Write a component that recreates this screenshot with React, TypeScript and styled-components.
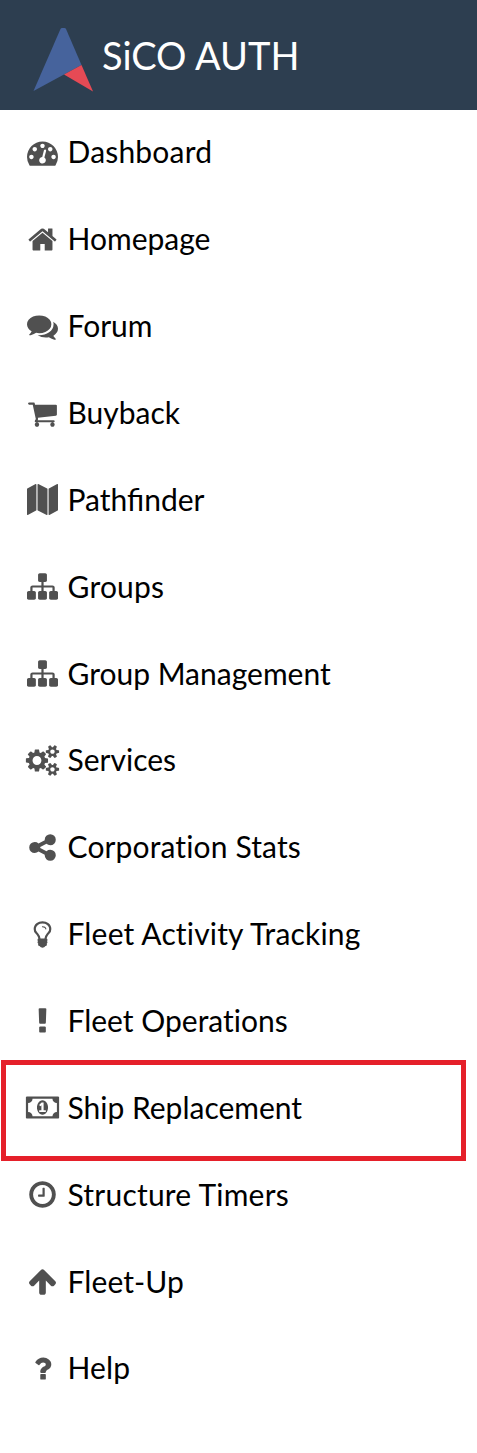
import React from "react";
import styled, { createGlobalStyle } from "styled-components";

const GlobalStyle = createGlobalStyle`
  body {
    margin: 0;
    background: #ffffff;
    font-family: Lato, "Liberation Sans", sans-serif;
  }
`;

const Sidebar = styled.aside`
  width: 477px;
  height: 1453px;
  overflow: hidden;
`;

const Header = styled.header`
  display: flex;
  align-items: flex-start;
  height: 110px;
  padding-left: 33px;
  box-sizing: border-box;
  background: #2d3e50;
`;

const Logo = styled.svg`
  flex: none;
  width: 61px;
  height: 65px;
  margin-top: 27px;
`;

const Title = styled.h1`
  margin: 0 0 0 8px;
  color: #ffffff;
  font-size: 38px;
  font-weight: 400;
  line-height: 110px;
  white-space: nowrap;
`;

const Menu = styled.nav`
  display: flex;
  flex-direction: column;
`;

const Item = styled.a`
  position: relative;
  display: flex;
  align-items: center;
  height: 86.86px;
  padding: 0 0 2px 22.5px;
  box-sizing: border-box;
  color: #000000;
  text-decoration: none;
`;

const Label = styled.span<{ $ligatures: boolean; $tracking: number }>`
  margin-bottom: 2px;
  font-size: 30px;
  font-variant-ligatures: ${({ $ligatures }) => ($ligatures ? "normal" : "none")};
  letter-spacing: ${({ $tracking }) => $tracking}px;
  line-height: 44px;
  white-space: nowrap;
`;

const Icon = styled.svg`
  flex: none;
  width: 31px;
  height: 31px;
  margin: 0 9.5px 0 4.5px;
  overflow: visible;
  fill: #505050;
`;

const Marker = styled.span`
  position: absolute;
  top: -5.4px;
  left: 1px;
  width: 465px;
  height: 101px;
  box-sizing: border-box;
  border: 5px solid #e5202a;
`;

type Entry = {
  label: string;
  path: string;
  shift?: number;
  marked?: boolean;
  ligatures?: boolean;
  tracking?: number;
};

const sitemap =
  "M1792 1248v320q0 40-28 68t-68 28h-320q-40 0-68-28t-28-68v-320q0-40 28-68t68-28h96v-192h-512v192h96q40 0 68 28t28 68v320q0 40-28 68t-68 28h-320q-40 0-68-28t-28-68v-320q0-40 28-68t68-28h96v-192h-512v192h96q40 0 68 28t28 68v320q0 40-28 68t-68 28h-320q-40 0-68-28t-28-68v-320q0-40 28-68t68-28h96v-192q0-52 38-90t90-38h512v-192h-96q-40 0-68-28t-28-68v-320q0-40 28-68t68-28h320q40 0 68 28t28 68v320q0 40-28 68t-68 28h-96v192h512q52 0 90 38t38 90v192h96q40 0 68 28t28 68z";

const entries: Entry[] = [
  {
    label: "Dashboard",
    tracking: 0.2,
    path: "M384 1152q0-53-37.5-90.5t-90.5-37.5-90.5 37.5-37.5 90.5 37.5 90.5 90.5 37.5 90.5-37.5 37.5-90.5zm192-448q0-53-37.5-90.5t-90.5-37.5-90.5 37.5-37.5 90.5 37.5 90.5 90.5 37.5 90.5-37.5 37.5-90.5zm428 481l101-382q6-26-7.5-48.5t-38.5-29.5-48 6.5-30 39.5l-101 382q-60 5-107 43.5t-63 98.5q-20 77 20 146t117 89 146-20 89-117q16-60-6-117t-72-91zm660-33q0-53-37.5-90.5t-90.5-37.5-90.5 37.5-37.5 90.5 37.5 90.5 90.5 37.5 90.5-37.5 37.5-90.5zm-640-640q0-53-37.5-90.5t-90.5-37.5-90.5 37.5-37.5 90.5 37.5 90.5 90.5 37.5 90.5-37.5 37.5-90.5zm448 192q0-53-37.5-90.5t-90.5-37.5-90.5 37.5-37.5 90.5 37.5 90.5 90.5 37.5 90.5-37.5 37.5-90.5zm320 448q0 261-141 483-19 29-54 29h-1402q-35 0-54-29-141-221-141-483 0-182 71-348t191-286 286-191 348-71 348 71 286 191 191 286 71 348z",
  },
  {
    label: "Homepage",
    path: "M1472 992v480q0 26-19 45t-45 19h-384v-384h-256v384h-384q-26 0-45-19t-19-45v-480q0-1 .5-3t.5-3l575-474 575 474q1 2 1 6zm223-69l-62 74q-8 9-21 11h-3q-13 0-21-7l-692-577-692 577q-12 8-24 7-13-2-21-11l-62-74q-8-10-7-23.5t11-21.5l719-599q32-26 76-26t76 26l244 204v-195q0-14 9-23t23-9h192q14 0 23 9t9 23v408l219 182q10 8 11 21.5t-7 23.5z",
  },
  {
    label: "Forum",
    path: "M1408 768q0 139-94 257t-256.5 186.5-353.5 68.5q-86 0-176-16-124 88-278 128-36 9-86 16h-3q-11 0-20.5-8t-11.5-21q-1-3-1-6.5t.5-6.5 2-6l2.5-5 3.5-5.5 4-5 4.5-5 4-4.5q5-6 23-25t26-29.5 22.5-29 25-38.5 20.5-44q-124-72-195-177t-71-224q0-139 94-257t256.5-186.5 353.5-68.5 353.5 68.5 256.5 186.5 94 257zm384 256q0 120-71 224.5t-195 176.5q10 24 20.5 44t25 38.5 22.5 29 26 29.5 23 25q1 1 4 4.5t4.5 5 4 5 3.5 5.5l2.5 5 2 6 .5 6.5-1 6.5q-3 14-13 22t-22 7q-50-7-86-16-154-40-278-128-90 16-176 16-271 0-472-132 58 4 88 4 161 0 309-45t264-129q125-92 192-212t67-254q0-77-23-152 129 71 204 178t75 230z",
  },
  {
    label: "Buyback",
    path: "M704 1536q0 52-38 90t-90 38-90-38-38-90 38-90 90-38 90 38 38 90zm896 0q0 52-38 90t-90 38-90-38-38-90 38-90 90-38 90 38 38 90zm128-1088v512q0 24-16.5 42.5t-40.5 21.5l-1044 122q13 60 13 70 0 16-24 64h920q26 0 45 19t19 45-19 45-45 19h-1024q-26 0-45-19t-19-45q0-11 8-31.5t16-36 21.5-40 15.5-29.5l-177-823h-204q-26 0-45-19t-19-45 19-45 45-19h256q16 0 28.5 6.5t19.5 15.5 13 24.5 8 26 5.5 29.5 4.5 26h1201q26 0 45 19t19 45z",
  },
  {
    label: "Pathfinder",
    ligatures: true,
    path: "M512 0q13 0 22.5 9.5t9.5 22.5v1472q0 20-17 28l-480 256q-7 4-15 4-13 0-22.5-9.5t-9.5-22.5v-1472q0-20 17-28l480-256q7-4 15-4zm1248 0q13 0 22.5 9.5t9.5 22.5v1472q0 20-17 28l-480 256q-7 4-15 4-13 0-22.5-9.5t-9.5-22.5v-1472q0-20 17-28l480-256q7-4 15-4zm-1120 0q8 0 14 3l512 256q18 10 18 29v1472q0 13-9.5 22.5t-22.5 9.5q-8 0-14-3l-512-256q-18-10-18-29v-1472q0-13 9.5-22.5t22.5-9.5z",
  },
  { label: "Groups", tracking: 0.2, path: sitemap },
  { label: "Group Management", path: sitemap },
  {
    label: "Services",
    path: "M832 896q0-106-75-181t-181-75-181 75-75 181 75 181 181 75 181-75 75-181zm768 512q0-52-38-90t-90-38-90 38-38 90q0 53 37.5 90.5t90.5 37.5 90.5-37.5 37.5-90.5zm0-1024q0-52-38-90t-90-38-90 38-38 90q0 53 37.5 90.5t90.5 37.5 90.5-37.5 37.5-90.5zm-384 421v185q0 10-7 19.5t-16 10.5l-155 24q-11 35-32 76 34 48 90 115 7 11 7 20 0 12-7 19-23 30-82.5 89.5t-78.5 59.5q-11 0-21-7l-115-90q-37 19-77 31-11 108-23 155-7 24-30 24h-186q-11 0-20-7.5t-10-17.5l-23-153q-34-10-75-31l-118 89q-7 7-20 7-11 0-21-8-144-133-144-160 0-9 7-19 10-14 41-53t47-61q-23-44-35-82l-152-24q-10-1-17-9.5t-7-19.5v-185q0-10 7-19.5t16-10.5l155-24q11-35 32-76-34-48-90-115-7-11-7-20 0-12 7-20 22-30 82-89t79-59q11 0 21 7l115 90q34-18 77-32 11-108 23-154 7-24 30-24h186q11 0 20 7.5t10 17.5l23 153q34 10 75 31l118-89q8-7 20-7 11 0 21 8 144 133 144 160 0 8-7 19-12 16-42 54t-45 60q23 48 34 82l152 23q10 2 17 10.5t7 19.5zm640 533v140q0 16-149 31-12 27-30 52 51 113 51 138 0 4-4 7-122 71-124 71-8 0-46-47t-52-68q-20 2-30 2t-30-2q-14 21-52 68t-46 47q-2 0-124-71-4-3-4-7 0-25 51-138-18-25-30-52-149-15-149-31v-140q0-16 149-31 13-29 30-52-51-113-51-138 0-4 4-7 4-2 35-20t59-34 30-16q8 0 46 46.5t52 67.5q20-2 30-2t30 2q51-71 92-112l6-2q4 0 124 70 4 3 4 7 0 25-51 138 17 23 30 52 149 15 149 31zm0-1024v140q0 16-149 31-12 27-30 52 51 113 51 138 0 4-4 7-122 71-124 71-8 0-46-47t-52-68q-20 2-30 2t-30-2q-14 21-52 68t-46 47q-2 0-124-71-4-3-4-7 0-25 51-138-18-25-30-52-149-15-149-31v-140q0-16 149-31 13-29 30-52-51-113-51-138 0-4 4-7 4-2 35-20t59-34 30-16q8 0 46 46.5t52 67.5q20-2 30-2t30 2q51-71 92-112l6-2q4 0 124 70 4 3 4 7 0 25-51 138 17 23 30 52 149 15 149 31z",
  },
  {
    label: "Corporation Stats",
    tracking: 0.14,
    path: "M1344 1024q133 0 226.5 93.5t93.5 226.5-93.5 226.5-226.5 93.5-226.5-93.5-93.5-226.5q0-12 2-34l-360-180q-92 86-218 86-133 0-226.5-93.5t-93.5-226.5 93.5-226.5 226.5-93.5q126 0 218 86l360-180q-2-22-2-34 0-133 93.5-226.5t226.5-93.5 226.5 93.5 93.5 226.5-93.5 226.5-226.5 93.5q-126 0-218-86l-360 180q2 22 2 34t-2 34l360 180q92-86 218-86z",
  },
  {
    label: "Fleet Activity Tracking",
    tracking: 0.17,
    path: "M1120 576q0 13-9.5 22.5t-22.5 9.5-22.5-9.5-9.5-22.5q0-46-54-71t-106-25q-13 0-22.5-9.5t-9.5-22.5 9.5-22.5 22.5-9.5q50 0 99.5 16t87 54 37.5 90zm160 0q0-72-34.5-134t-90-101.5-123-62-136.5-22.5-136.5 22.5-123 62-90 101.5-34.5 134q0 101 68 180 10 11 30.5 33t30.5 33q128 153 141 298h228q13-145 141-298 10-11 30.5-33t30.5-33q68-79 68-180zm128 0q0 155-103 268-45 49-74.5 87t-59.5 95.5-34 107.5q47 28 47 82 0 37-25 64 25 27 25 64 0 52-45 81 13 23 13 47 0 46-31.5 71t-77.5 25q-20 44-60 70t-87 26-87-26-60-70q-46 0-77.5-25t-31.5-71q0-24 13-47-45-29-45-81 0-37 25-64-25-27-25-64 0-54 47-82-4-50-34-107.5t-59.5-95.5-74.5-87q-103-113-103-268 0-99 44.5-184.5t117-142 164-89 186.5-32.5 186.5 32.5 164 89 117 142 44.5 184.5z",
  },
  {
    label: "Fleet Operations",
    path: "M1088 1248v224q0 26-19 45t-45 19h-256q-26 0-45-19t-19-45v-224q0-26 19-45t45-19h256q26 0 45 19t19 45zm30-1056l-28 768q-1 26-20.5 45t-45.5 19h-256q-26 0-45.5-19t-20.5-45l-28-768q-1-26 17.5-45t44.5-19h320q26 0 44.5 19t17.5 45z",
  },
  {
    label: "Ship Replacement",
    marked: true,
    shift: -64,
    path: "M768 1152h384v-96h-128v-448h-114l-148 137 77 80q42-37 55-57h2v288h-128v96zm512-256q0 70-21 142t-59.5 134-101.5 101-138 39-138-39-101.5-101-59.5-134-21-142 21-142 59.5-134 101.5-101 138-39 138 39 101.5 101 59.5 134 21 142zm512 256v-512q-106 0-181-75t-75-181h-1152q0 106-75 181t-181 75v512q106 0 181 75t75 181h1152q0-106 75-181t181-75zm128-832v1152q0 26-19 45t-45 19h-1792q-26 0-45-19t-19-45v-1152q0-26 19-45t45-19h1792q26 0 45 19t19 45z",
  },
  {
    label: "Structure Timers",
    tracking: 0.22,
    path: "M1024 544v448q0 14-9 23t-23 9h-320q-14 0-23-9t-9-23v-64q0-14 9-23t23-9h224v-352q0-14 9-23t23-9h64q14 0 23 9t9 23zm416 352q0-148-73-273t-198-198-273-73-273 73-198 198-73 273 73 273 198 198 273 73 273-73 198-198 73-273zm224 0q0 209-103 385.5t-279.5 279.5-385.5 103-385.5-103-279.5-279.5-103-385.5 103-385.5 279.5-279.5 385.5-103 385.5 103 279.5 279.5 103 385.5z",
  },
  {
    label: "Fleet-Up",
    tracking: 0.1,
    path: "M1675 971q0 51-37 90l-75 75q-38 38-91 38-54 0-90-38l-294-293v704q0 52-37.5 84.5t-90.5 32.5h-128q-53 0-90.5-32.5t-37.5-84.5v-704l-294 293q-36 38-90 38t-90-38l-75-75q-38-38-38-90 0-53 38-91l651-651q35-37 90-37 54 0 91 37l651 651q37 39 37 91z",
  },
  {
    label: "Help",
    tracking: 0.15,
    path: "M1088 1256v240q0 16-12 28t-28 12h-240q-16 0-28-12t-12-28v-240q0-16 12-28t28-12h240q16 0 28 12t12 28zm316-600q0 54-15.5 101t-35 76.5-55 59.5-57.5 43.5-61 35.5q-41 23-68.5 65t-27.5 67q0 17-12 32.5t-28 15.5h-240q-15 0-25.5-18.5t-10.5-37.5v-45q0-83 65-156.5t143-108.5q59-27 84-56t25-76q0-42-46.5-74t-107.5-32q-65 0-108 29-35 25-107 115-13 16-31 16-12 0-25-8l-164-125q-13-10-15.5-25t5.5-28q160-266 464-266 80 0 161 31t146 83 106 127.5 41 158.5z",
  },
];

export default function App() {
  return (
    <Sidebar>
      <GlobalStyle />
      <Header>
        <Logo viewBox="0 0 61 65">
          <path d="M27.5 2q.5-1 1.5-1h2.5q1 0 1.5 1L48.5 38 .5 64z" fill="#46639c" />
          <path d="M48.5 38 31 47.5 60 64.5z" fill="#e64a55" />
        </Logo>
        <Title>SiCO AUTH</Title>
      </Header>
      <Menu>
        {entries.map(({ label, path, shift = 0, marked, ligatures = false, tracking = 0 }) => (
          <Item key={label}>
            <Icon viewBox="0 0 1792 1792">
              <path d={path} transform={`translate(${shift} 0)`} />
            </Icon>
            <Label $ligatures={ligatures} $tracking={tracking}>
              {label}
            </Label>
            {marked && <Marker />}
          </Item>
        ))}
      </Menu>
    </Sidebar>
  );
}
